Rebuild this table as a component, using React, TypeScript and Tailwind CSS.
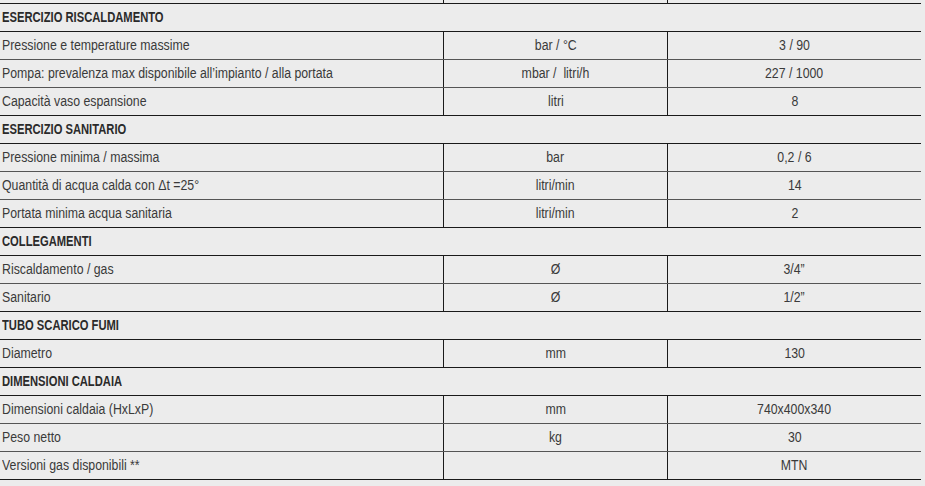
import React from 'react';

type Row = { label: string; unit?: string; value?: string; head?: boolean };

const rows: Row[] = [
  { label: 'ESERCIZIO RISCALDAMENTO', head: true },
  { label: 'Pressione e temperature massime', unit: 'bar / °C', value: '3 / 90' },
  { label: 'Pompa: prevalenza max disponibile all’impianto / alla portata', unit: 'mbar /  litri/h', value: '227 / 1000' },
  { label: 'Capacità vaso espansione', unit: 'litri', value: '8' },
  { label: 'ESERCIZIO SANITARIO', head: true },
  { label: 'Pressione minima / massima', unit: 'bar', value: '0,2 / 6' },
  { label: 'Quantità di acqua calda con Δt =25°', unit: 'litri/min', value: '14' },
  { label: 'Portata minima acqua sanitaria', unit: 'litri/min', value: '2' },
  { label: 'COLLEGAMENTI', head: true },
  { label: 'Riscaldamento / gas', unit: 'Ø', value: '3/4”' },
  { label: 'Sanitario', unit: 'Ø', value: '1/2”' },
  { label: 'TUBO SCARICO FUMI', head: true },
  { label: 'Diametro', unit: 'mm', value: '130' },
  { label: 'DIMENSIONI CALDAIA', head: true },
  { label: 'Dimensioni caldaia (HxLxP)', unit: 'mm', value: '740x400x340' },
  { label: 'Peso netto', unit: 'kg', value: '30' },
  { label: 'Versioni gas disponibili **', unit: '', value: 'MTN' },
];

// condensed look: Liberation Sans squeezed horizontally
const narrow = 'inline-block whitespace-pre scale-x-[0.88]';

export default function App() {
  return (
    <div
      className="w-[925px] h-[486px] bg-[#ececec] text-[#3a3a3a] text-[14px] overflow-hidden"
      style={{ fontFamily: '"Liberation Sans", Arial, sans-serif' }}
    >
      <div className="w-[921px]">
        {/* tail of previous row */}
        <div className="grid grid-cols-[444px_224px_253px] h-[4px] border-b border-[#1a1a1a]">
          <div className="border-r border-[#1a1a1a]" />
          <div className="border-r border-[#1a1a1a]" />
          <div />
        </div>
        {rows.map((r, i) => {
          const next = rows[i + 1];
          const line = r.head || !next || next.head ? 'border-[#1a1a1a]' : 'border-[#555]';
          if (r.head) {
            return (
              <div key={i} className={`h-[28px] flex items-center pl-[2px] font-bold text-[#2a2a2a] border-b ${line}`}>
                <span className="inline-block whitespace-pre scale-x-[0.8] origin-left">{r.label}</span>
              </div>
            );
          }
          return (
            <div key={i} className={`grid grid-cols-[444px_224px_253px] h-[28px] border-b ${line}`}>
              <div className="flex items-center pl-[2px] border-r border-[#1a1a1a]">
                <span className={`${narrow} origin-left`}>{r.label}</span>
              </div>
              <div className="flex items-center justify-center border-r border-[#1a1a1a]">
                <span className={`${narrow} origin-center`}>{r.unit}</span>
              </div>
              <div className="flex items-center justify-center">
                <span className={`${narrow} origin-center`}>{r.value}</span>
              </div>
            </div>
          );
        })}
      </div>
    </div>
  );
}
